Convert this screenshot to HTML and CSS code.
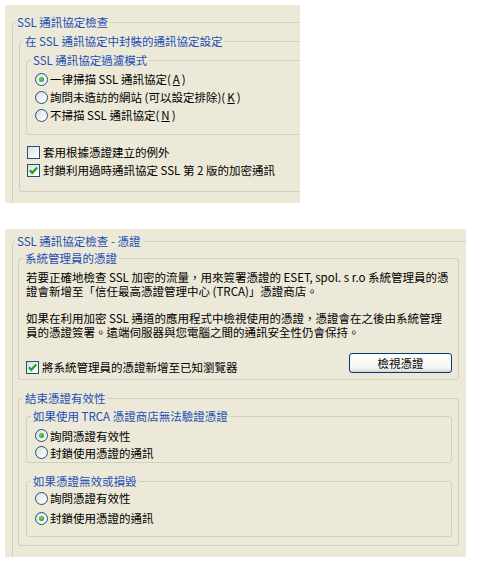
FILE: index.html
```html
<!DOCTYPE html>
<html lang="zh-Hant">
<head>
    <meta charset="UTF-8">
    <title>SSL 通訊協定檢查</title>
    <link rel="stylesheet" href="styles.css">
</head>
<body>
    <!-- SSL filtering settings -->
    <div class="panel panel-top">
        <fieldset class="group group-outer">
            <legend>SSL 通訊協定檢查</legend>
            <fieldset class="group group-mid">
                <legend>在 SSL 通訊協定中封裝的通訊協定設定</legend>
                <fieldset class="group group-mode">
                    <legend>SSL 通訊協定過濾模式</legend>
                    <label class="option"><span class="radio checked"></span>一律掃描 SSL 通訊協定(<u>A</u>)</label>
                    <label class="option"><span class="radio"></span>詢問未造訪的網站 (可以設定排除)(<u>K</u>)</label>
                    <label class="option"><span class="radio"></span>不掃描 SSL 通訊協定(<u>N</u>)</label>
                </fieldset>
                <div class="checks">
                    <label class="option"><span class="check"></span>套用根據憑證建立的例外</label>
                    <label class="option"><span class="check checked"><svg width="11" height="11" viewBox="0 0 11 11"><path d="M1.8 5.2 L4.3 7.8 L9.2 2.6" fill="none" stroke="#21a121" stroke-width="2.2"/></svg></span>封鎖利用過時通訊協定 SSL 第 2 版的加密通訊</label>
                </div>
            </fieldset>
        </fieldset>
    </div>

    <!-- Certificates -->
    <div class="panel panel-bottom">
        <fieldset class="group group-outer cert-outer">
            <legend>SSL 通訊協定檢查 - 憑證</legend>
            <fieldset class="group group-admin">
                <legend>系統管理員的憑證</legend>
                <p>若要正確地檢查 SSL 加密的流量，用來簽署憑證的 ESET, spol. s r.o 系統管理員的憑<br>證會新增至「信任最高憑證管理中心 (TRCA)」憑證商店。</p>
                <p>如果在利用加密 SSL 通道的應用程式中檢視使用的憑證，憑證會在之後由系統管理<br>員的憑證簽署。遠端伺服器與您電腦之間的通訊安全性仍會保持。</p>
                <div class="admin-row">
                    <label class="option"><span class="check checked"><svg width="11" height="11" viewBox="0 0 11 11"><path d="M1.8 5.2 L4.3 7.8 L9.2 2.6" fill="none" stroke="#21a121" stroke-width="2.2"/></svg></span>將系統管理員的憑證新增至已知瀏覽器</label>
                    <button type="button" class="xp-button">檢視憑證</button>
                </div>
            </fieldset>
            <fieldset class="group group-validity">
                <legend>結束憑證有效性</legend>
                <fieldset class="group group-trca">
                    <legend>如果使用 TRCA 憑證商店無法驗證憑證</legend>
                    <label class="option"><span class="radio checked"></span>詢問憑證有效性</label>
                    <label class="option"><span class="radio"></span>封鎖使用憑證的通訊</label>
                </fieldset>
                <fieldset class="group group-broken">
                    <legend>如果憑證無效或損毀</legend>
                    <label class="option"><span class="radio"></span>詢問憑證有效性</label>
                    <label class="option"><span class="radio checked"></span>封鎖使用憑證的通訊</label>
                </fieldset>
            </fieldset>
        </fieldset>
    </div>
</body>
</html>
```

FILE: styles.css
```css
/* Colours of the classic XP dialog */
:root {
    --dialog-bg: #ece9d8;
    --group-border: #d0d0bf;
    --group-text: #1c4fb4;
    --control-border: #1c5180;
    --tick: #21a121;
}

body {
    margin: 0;
    background: #fff;
    color: #000;
    font-family: "Noto Sans CJK TC", sans-serif;
    font-size: 11.5px;
    line-height: 18px;
}

/* Panels (cropped dialog pieces) */
.panel {
    background: var(--dialog-bg);
    overflow: hidden;
    margin-left: 5px;
    box-sizing: border-box;
    padding-left: 7px;
}

.panel-top {
    width: 295px;
    height: 198px;
    margin-top: 5px;
    padding-top: 10px;
}

.panel-bottom {
    width: 461px;
    height: 328px;
    margin-top: 26px;
    padding-top: 5px;
}

/* Group boxes */
.group {
    --pad: 6px;
    margin: 0;
    min-width: 0;
    border: 1px solid var(--group-border);
    border-radius: 3px;
    padding: 0 6px 0 var(--pad);
}

.group legend {
    color: var(--group-text);
    line-height: 14px;
    padding: 0 2px;
    margin-left: calc(4px - var(--pad));
    white-space: nowrap;
}

.group-outer {
    margin-right: -60px;
    padding-top: 5px;
    padding-bottom: 30px;
}

.group-outer > legend {
    margin-left: calc(2px - var(--pad));
}

.group-mid {
    padding-top: 5px;
    padding-bottom: 12px;
}

.group-mid > legend {
    margin-left: calc(3px - var(--pad));
}

.group-mode {
    --pad: 8px;
    padding-top: 3px;
    padding-bottom: 10px;
}

.checks {
    margin-top: 8px;
    margin-left: 1px;
}

/* Certificate panel */
.cert-outer {
    --pad: 5px;
    margin-right: -3px;
    padding-top: 3px;
    padding-right: 9px;
}

.group-admin {
    --pad: 7px;
    padding-top: 5px;
    padding-bottom: 3px;
}

.group-admin p {
    margin: 0 0 13px;
    line-height: 14px;
    white-space: nowrap;
}

.group-admin p:last-of-type {
    margin-bottom: 0;
}

.admin-row {
    display: flex;
    justify-content: space-between;
    align-items: flex-start;
    margin-top: 14px;
}

.admin-row .option {
    margin-top: 5px;
}

.group-validity {
    --pad: 7px;
    margin-top: 11px;
    padding-top: 4px;
    padding-bottom: 8px;
}

.group-trca {
    --pad: 8px;
    padding-top: 4px;
    padding-bottom: 1px;
}

.group-trca .option {
    height: 17px;
}

.group-broken {
    --pad: 8px;
    margin-top: 11px;
    padding-top: 1px;
    padding-bottom: 9px;
}

.group-broken .option + .option {
    margin-top: 2px;
}

/* Options */
.option {
    display: flex;
    align-items: center;
    gap: 2px;
    height: 18px;
    white-space: nowrap;
}

.radio,
.check {
    flex: none;
    width: 11px;
    height: 11px;
    border: 1px solid var(--control-border);
    background: linear-gradient(135deg, #dcdcd7 0%, #fbfbf9 80%, #fff 100%);
    position: relative;
}

.radio {
    border-radius: 50%;
}

.radio.checked::after {
    content: "";
    position: absolute;
    left: 3px;
    top: 3px;
    width: 5px;
    height: 5px;
    border-radius: 50%;
    background: radial-gradient(circle at 40% 40%, #6fdc6f, var(--tick) 70%);
}

.check {
    margin-right: 1px;
}

.check svg {
    display: block;
}

/* Button */
.xp-button {
    width: 103px;
    height: 20px;
    padding: 0;
    border: 1px solid #003c74;
    border-radius: 3px;
    background: linear-gradient(#ffffff, #f3f3ef 80%, #d8d4c8);
    font: inherit;
    line-height: 18px;
    color: #000;
}
```
